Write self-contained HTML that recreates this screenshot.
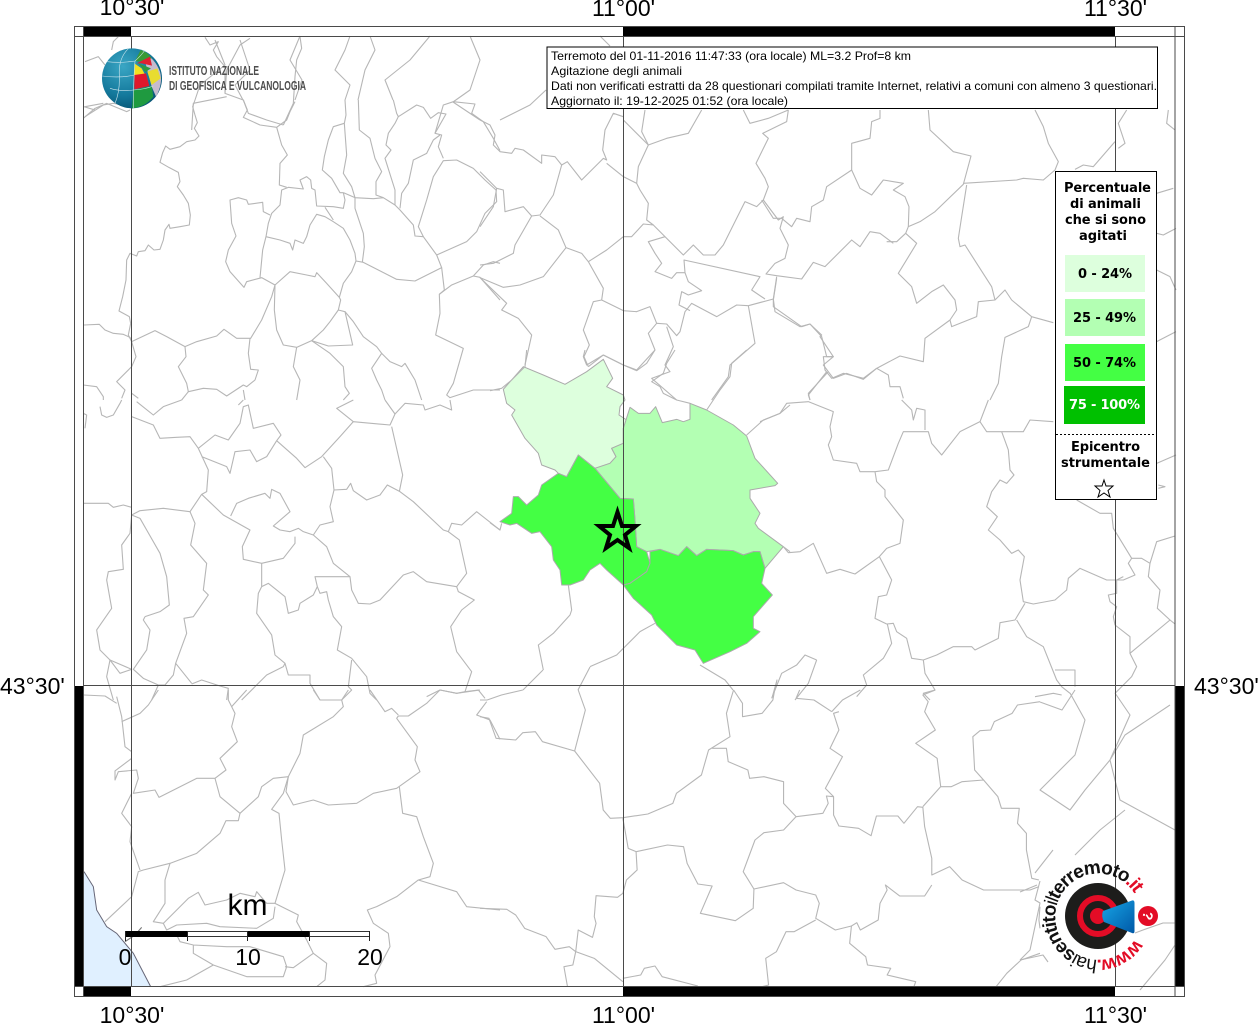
<!DOCTYPE html>
<html><head><meta charset="utf-8"><style>
html,body{margin:0;padding:0;background:#fff;width:1258px;height:1024px;overflow:hidden}
svg{display:block;position:absolute;left:0;top:0}
.m path{fill:none;stroke:#b6b6b6;stroke-width:1.1;stroke-linejoin:round;vector-effect:non-scaling-stroke}
.h{font-family:"Liberation Sans",sans-serif;font-size:23px;fill:#000}
.i{font-family:"Liberation Sans",sans-serif;font-size:12px;fill:#000}
.l{font-family:"DejaVu Sans",sans-serif;font-size:13px;font-weight:bold;fill:#000}
.p{stroke:#aaa;stroke-width:1;vector-effect:non-scaling-stroke;stroke-linejoin:round}
</style></head><body>
<svg width="1258" height="1024" viewBox="0 0 1258 1024" xmlns="http://www.w3.org/2000/svg">
<!-- water -->
<g transform="translate(80,690) scale(.33333)"><path d="M12 545 40 590 50 660 80 710 110 730 160 790 212 890 12 890Z" fill="#e0f0ff"/><path d="M12 545 40 590 50 660 80 710 110 730 160 790 212 890" fill="none" stroke="#667" stroke-width="3"/></g>
<!-- coloured municipalities -->
<g transform="translate(490,350) scale(.33333)">
<path class="p" fill="#ddffdd" d="M40 118 100 50 160 75 225 103 290 65 340 28 368 85 350 110 400 135 405 150 390 170 387 195 410 210 400 235 400 280 365 295 378 320 360 340 315 355 265 315 230 380 205 370 195 360 155 345 145 310 105 265 65 195 75 180 50 160Z"/>
<path class="p" fill="#b3ffb3" d="M400 235 420 172 445 190 480 190 497 170 517 218 560 208 580 215 600 208 600 160 650 180 730 225 770 258 795 325 863 400 855 407 780 420 780 445 810 490 795 520 805 535 880 590 825 655 810 605 790 605 760 615 730 602 650 598 620 617 590 590 565 617 510 598 470 605 440 590 435 510 430 447 390 445 315 355 360 340 378 320 365 295 400 280Z"/>
<path class="p" fill="#44ff44" d="M30 515 65 490 70 440 85 440 110 465 145 435 155 405 205 370 230 380 265 315 315 355 390 445 430 447 435 510 440 590 470 605 480 640 470 665 420 700 400 705 350 660 330 640 300 660 280 690 240 705 215 705 210 660 190 630 185 590 150 545 125 550 80 520 60 525Z"/>
<path class="p" fill="#44ff44" d="M480 605 510 598 565 617 590 590 620 617 650 598 730 602 760 615 790 605 810 605 825 655 815 700 847 735 790 800 790 835 810 845 770 880 720 905 640 940 615 900 560 885 500 825 485 795 430 745 400 705 420 700 470 665 480 640Z"/>
</g>
<!-- borders -->
<g class="m">
<g transform="translate(80,100) scale(.33333)"><path d="M345 0 338 20 345 45 352 68 343 85 357 108 345 120 320 125 300 140 270 148 257 138 248 158 240 187 268 203 295 217 300 245 292 260 310 285 325 310 331 345 328 375 300 380 270 385 267 373 255 390 250 420 240 448 222 450 205 435 195 452 175 455 170 468 150 460 140 480 138 540 128 590 117 633 148 650 152 670 145 705 155 725"/>
<path d="M12 675 58 673 75 690 100 700 130 703 150 712 155 725 225 692 260 710 315 740 350 725 410 708 432 688 470 715 512 715 545 660 575 590 585 555"/>
<path d="M540 533 548 450 558 410 565 370 575 340 600 315 605 270 625 262 670 267 660 240 680 230 692 240 695 265 705 270 710 318 760 320 790 325 795 300 790 278"/>
<path d="M570 345 550 335 548 307 505 313 500 300 475 293 450 300 455 370 468 408 445 450 437 485 450 515 492 562 500 545 545 533 585 555 630 515 680 525 705 530 710 518 740 550 778 592 790 550 815 515 828 483 825 460 810 420 790 385 760 365 735 350 710 343 690 375 680 410 670 430 645 420 638 450 630 430 600 420 558 410"/>
<path d="M585 555 583 630 590 690 610 735 650 742 695 722 730 690 750 665 775 630 782 600 778 592"/>
<path d="M695 722 745 738 818 735 795 635 775 630"/>
<path d="M795 635 820 665 850 710 890 740 905 760 875 805 890 840 905 870 915 900"/>
<path d="M905 760 930 785 965 800 975 790 1005 840 1025 900"/>
<path d="M650 742 640 800 660 840 650 900"/>
<path d="M695 722 750 760 790 800 795 860 808 880 790 900"/>
<path d="M510 715 505 760 512 808 535 810 525 840 500 860 490 855 440 888 410 868 370 865 325 875 320 850 295 800 318 770 315 740"/>
<path d="M325 875 305 900M490 870 495 900"/>
<path d="M735 322 760 360M790 278 825 293 880 296 910 293 945 315 960 330 1000 375 1005 408 1030 410 1070 465 1085 503 1005 543 950 538 850 487 828 483"/>
<path d="M825 293 825 325 850 400 853 440 847 487"/>
<path d="M1085 503 1093 570 1078 583 1080 640 1067 705 1150 745 1120 850 1100 885 1110 893 1180 870 1260 870"/>
<path d="M1078 583 1115 555 1180 528 1200 532 1260 600M1180 528 1210 495 1240 485 1260 490"/>
<path d="M1070 465 1160 425 1190 395 1215 340 1250 305 1248 270 1215 240 1180 205 1130 180 1090 182 1060 230 1040 300 1015 380 1030 410"/>
<path d="M1090 175 1075 140 1085 105 1065 100 1098 42 1075 38 1052 55 1030 22 1010 15 955 50 945 70 925 100 918 135 933 150 915 175 945 270 945 315"/>
<path d="M960 325 965 280 985 250 1000 180 1040 160 1060 120 1080 105"/>
<path d="M835 0 838 90 870 115 885 175 905 215 888 245 888 285 910 293"/>
<path d="M795 0 798 45 793 70 800 165 790 220 815 260 825 293"/>
<path d="M793 70 760 80 745 120 733 170 727 210 755 235 780 278 790 278"/>
<path d="M940 0 950 40 955 50"/>
<path d="M1065 100 1090 15 1120 5 1185 12 1175 40 1210 65 1240 115 1260 152"/>
<path d="M490 0 502 30 490 52 540 75 590 82 620 60 630 35 645 5"/>
<path d="M590 82 605 135 622 165 600 190 598 255 620 262"/>
<path d="M10 55 45 25 80 10 140 35 150 30M12 20 45 30"/>
<path d="M155 725 168 770 155 800 110 845 135 870 125 895M155 880 175 895"/>
<path d="M10 855 50 860 70 890 70 900"/></g>
<g transform="translate(80,400) scale(.33333)"><path d="M155 50 220 75 240 115 290 112 330 110 355 145 385 210 380 275 365 283 330 335 250 325 180 332 155 345 150 400 125 435 130 508 85 515 80 540 95 625 50 690 60 750 90 780 120 820 155 808"/>
<path d="M170 5 220 45 250 20 305 0"/>
<path d="M355 145 405 105 445 120 480 70 490 20 505 15 520 85 580 70 603 105 590 122 560 170 530 185 510 150 465 155 450 220 440 200 365 170"/>
<path d="M490 0 475 15M590 122 650 175 675 203 725 170 780 110 820 65 930 75 945 42 975 10 1030 15 1035 30 1080 15 1115 30 1110 0"/>
<path d="M730 170 755 205 762 270 800 268 812 250 820 272 860 300 900 285 922 255 960 275 1000 305 1090 390 1105 395 1115 370 1145 375 1190 335 1260 390"/>
<path d="M915 0 945 42M820 65 770 25 820 0"/>
<path d="M935 80 968 225 958 275"/>
<path d="M762 270 750 320 760 365 720 375 700 405 670 395 655 385 630 395 600 390 580 378 630 335 600 280 575 268 570 295 555 280 505 295 470 310 452 348"/>
<path d="M365 283 430 345 510 390 487 440 490 478 545 490 610 475 645 430 645 410"/>
<path d="M700 405 740 440 760 490 810 530 815 570 835 610 870 612 900 600 970 525 1000 515 1040 545 1130 560 1160 520 1138 420 1105 395"/>
<path d="M545 490 545 560 535 580 530 640 575 705 585 765 615 790 625 825 690 825 690 850 720 900"/>
<path d="M545 560 565 550 615 590 625 640 655 630 660 610 700 585 712 560 705 530 810 530"/>
<path d="M712 560 720 580 740 575 745 600 760 650 785 680 772 750 815 775 860 830 870 880 890 900"/>
<path d="M1130 560 1135 575 1183 600 1145 630 1112 680 1130 755 1175 815 1155 875"/>
<path d="M330 335 345 370 332 435 380 490 370 570 385 585 340 650 312 655 320 700 287 790 335 850"/>
<path d="M195 650 240 635 268 615 260 530 240 460 200 390 180 355 155 345"/>
<path d="M195 650 190 660 210 690 200 750 160 808 190 835 235 855 255 855 280 825 287 790"/>
<path d="M155 808 90 780 80 830 100 900"/>
<path d="M235 855 215 900"/>
<path d="M10 310 85 310 100 322 130 315 155 322"/>
<path d="M335 852 365 840 420 858 445 865 440 900"/>
<path d="M485 900 525 860 560 825 610 800 615 790"/>
<path d="M815 780 805 860 815 870 785 900"/>
<path d="M1155 875 1130 880 1080 870 1040 890M1155 875 1195 870 1215 895"/>
<path d="M60 20 65 45 80 52 100 45 120 10 125 0"/>
<path d="M10 40 20 45 15 85"/></g>
<g transform="translate(80,690) scale(.33333)"><path d="M110 20 125 80 135 170 155 185M12 15 75 18 110 40"/>
<path d="M235 0 205 45 180 70 125 95"/>
<path d="M155 205 105 243 105 270 115 245 170 240 175 265 160 310 225 300 237 322 350 265 405 265 438 240 420 205 472 155 455 110 465 70 445 30 445 0"/>
<path d="M500 0 455 50"/>
<path d="M405 265 420 320 480 370 535 320 545 290 580 265 625 260 610 310 575 358 597 370 605 450 615 540 600 590 585 640 655 675 650 695 680 750 700 790 740 820 735 870 710 890"/>
<path d="M480 370 475 392 438 392 420 430 350 490 270 520 190 540 175 545 155 620 75 695"/>
<path d="M155 310 125 370 155 410 150 455 180 540"/>
<path d="M270 520 255 570 255 640 220 695 250 700 325 625 355 607 375 645 440 630 480 610 525 620 530 605 560 640 585 640"/>
<path d="M250 700 260 720 290 705 380 700 420 710 530 715 580 685 585 650"/>
<path d="M290 735 300 755 340 765 440 770 510 770 610 800 620 830 610 860 500 860 400 825 340 790 340 765"/>
<path d="M400 825 320 870 240 890"/>
<path d="M615 830 640 833 700 790"/>
<path d="M625 260 618 305 640 345 700 330 745 345 830 340 880 310 950 295 1020 245 1005 210 1012 170 950 85 955 78 985 78 1040 40 1075 5 1080 0"/>
<path d="M955 75 935 55 915 65 870 0"/>
<path d="M700 0 720 30 785 30 790 50 760 80 670 135 660 190 625 260"/>
<path d="M785 30 805 0"/>
<path d="M958 290 968 370 1010 380 1030 440 1060 520 1050 560 1015 570 950 620 890 650 862 660 880 700 925 730 930 770 885 855 890 880 850 890"/>
<path d="M1015 570 1130 605 1160 650 1260 660"/>
<path d="M1080 0 1130 10 1200 0M1220 35 1190 75 1230 90 1260 148"/>
<path d="M185 712 165 735 135 755" style="stroke:#777"/></g>
<g transform="translate(480,100) scale(.33333)"><path d="M0 60 30 75 45 105 40 135 60 155 95 160 105 145 130 150 185 190 185 165 225 170 245 195 262 185 305 240 370 175 380 180 368 150 375 90 400 40 430 50"/>
<path d="M245 195 220 285 180 345 155 348 130 320 75 335 70 270 50 265 0 215"/>
<path d="M50 265 40 320 0 380"/>
<path d="M155 348 105 435 100 460 40 490 0 495"/>
<path d="M180 348 235 390 258 443 305 460 325 485 370 565 365 600 340 605 310 690 328 735 312 770 325 800"/>
<path d="M258 443 190 530 120 555 70 562 0 533 80 610 65 630 115 655 155 705 135 795"/>
<path d="M325 485 380 450 430 410 455 410 490 372 520 375 500 360 505 310 480 270 470 250 430 230 380 190"/>
<path d="M470 250 475 200 505 135 430 60"/>
<path d="M505 135 485 95 495 30M505 135 560 115 625 100 665 30"/>
<path d="M365 600 430 632 470 635 510 620 530 670 505 700 525 750 470 810 430 795 370 765 325 800"/>
<path d="M520 375 610 465 640 435 670 465 705 465 730 435 795 305 830 320 850 300 865 260 855 235 828 190 865 115 848 100 920 65 925 30"/>
<path d="M850 300 895 360 910 350 900 385 925 435 915 475 885 490 858 522 890 527 965 537 1000 487 1035 500 1115 420 1140 440 1170 395 1200 400 1240 430"/>
<path d="M530 670 560 672 590 707 600 695 615 635 635 610 710 650 770 615 805 617 880 597 890 530"/>
<path d="M555 410 505 425 525 460 545 490 525 515 575 535 590 518 615 518 612 480 840 530 815 570 855 597"/>
<path d="M615 518 625 545 665 572 625 585 605 575 597 615 630 632"/>
<path d="M805 617 825 730 750 795 745 830 695 900"/>
<path d="M560 680 580 740 555 795 570 815 515 835 590 900"/>
<path d="M880 597 885 635 960 680 990 672 1025 710 1040 770 1060 770 1030 795 1045 815 985 880 990 900"/>
<path d="M1045 815 1060 835 1100 820 1150 838 1190 805"/>
<path d="M790 30 810 70 865 55 925 30"/></g>
<g transform="translate(760,100) scale(.33333)"><path d="M380 425 410 425 437 400 445 380 480 365 525 335 610 253 633 168 580 155 510 90 505 30"/>
<path d="M610 250 770 240 790 235 850 240 885 210 895 185 865 130 850 80 825 30"/>
<path d="M620 255 605 350 595 415 600 440 615 435 650 490 695 560 705 600 735 570 755 600 815 650 880 668M705 600 655 605 650 650 575 680 570 660 590 630 585 600 550 555 515 575 470 610 455 560 415 520 470 430 437 400"/>
<path d="M570 660 495 715 490 785 420 768 350 805 310 835 250 820 215 835 195 810 190 770 220 770 180 710 185 705 150 672 125 680 40 620 40 600 50 535"/>
<path d="M350 805 385 825 390 860 420 860 430 895"/>
<path d="M200 815 145 885 150 900"/>
<path d="M815 650 805 680 735 712 725 770 715 850 690 900"/>
<path d="M445 380 447 320 435 290 400 270 430 250 370 240 335 285 300 265 275 210 275 130 330 115 335 65 360 55 360 30"/>
<path d="M275 210 200 260 190 300 155 320 150 365 110 355 95 380 65 355 40 355 5 300"/>
<path d="M1065 125 1000 200 970 195 945 208"/>
<path d="M1190 280 1240 265M1190 400 1210 405 1248 385M1190 510 1230 530 1248 570M1190 725 1248 695"/>
<path d="M1100 30 1075 70 1095 130 1075 145"/>
<path d="M1225 30 1220 70 1245 90"/></g>
<g transform="translate(760,400) scale(.33333)"><path d="M0 65 60 40 80 10 145 5 220 35 210 80 215 110 205 135 220 180 290 190 300 215 345 215 385 210 415 130 430 95 505 95 515 130 545 165 600 95 660 65 680 95 725 95 790 95 810 60 880 65"/>
<path d="M425 0 455 30 460 60 470 25 495 30 495 90"/>
<path d="M660 65 685 0"/>
<path d="M725 95 745 150 750 210 762 225 740 250 720 240 695 275 680 320 712 350 685 390 720 420 755 460 775 450 793 470 780 540 790 605 820 612 885 600 920 570 925 535 960 505 1040 540 1090 540 1125 525 1105 490 1115 475 1060 385 1055 340 1020 340 950 300"/>
<path d="M345 215 350 245 375 270 375 290 430 360 420 430 380 445 358 470 395 540 380 585 355 590 345 655 380 672 400 670 410 695 440 715 455 775 490 780 530 765 580 740 635 740 645 750 715 715 720 668 765 660 795 610"/>
<path d="M358 470 285 522 240 508 200 520 160 430 120 455 85 458 70 440"/>
<path d="M382 672 395 730 370 775 310 825 320 855 290 890M490 780 495 820 525 870 490 880 510 900"/>
<path d="M770 660 800 710 850 740 890 840 905 860 930 880M885 810 945 810 945 860M825 890 880 880 905 885"/>
<path d="M170 780 135 765 110 795 65 820 35 895M170 780 145 850 105 900"/>
<path d="M1115 475 1145 475 1170 490 1165 530 1200 570 1192 625 1230 660 1110 760 1110 710 1065 675 1060 650 1070 620 1050 605 1045 585 1070 580 1070 540 1090 530"/>
<path d="M1230 660 1245 672M1170 490 1190 425 1245 408"/>
<path d="M1110 760 1130 800 1115 830 1065 880"/>
<path d="M1190 190 1248 165M1195 255 1215 260 1195 265"/></g>
<g transform="translate(480,690) scale(.35714,.33333)"><path d="M0 30 20 30 60 15 120 0"/>
<path d="M0 80 25 85 45 145 100 150 120 128 155 125 175 155 265 183 295 60 275 0"/>
<path d="M265 183 335 280 345 360 365 385 400 383 470 372 540 340 550 310 620 255 640 180 700 140 690 70 710 0"/>
<path d="M400 385 415 475 437 485 525 465 570 470 580 520 610 582 650 588 617 670 715 692 765 655 767 597 737 545 770 450 795 428 850 420 885 380 850 340 850 275 795 260 755 265 750 240 695 215 690 175 650 175"/>
<path d="M885 380 960 370 975 340 970 318 990 320 990 375 1005 408 1060 415 1095 437 1110 378 1170 378 1187 400 1225 350 1240 352 1245 410 1265 505 1265 555 1315 530 1350 570 1410 600 1470 600 1540 600 1565 590"/>
<path d="M990 320 967 295 1015 200 980 175 1005 120 990 70 1005 65"/>
<path d="M1240 350 1290 290 1320 290 1350 275 1410 270 1450 320 1460 355 1510 355 1505 400 1530 430 1530 480 1545 565 1565 570"/>
<path d="M1290 290 1280 205 1220 160 1275 120 1245 65 1255 35 1240 15 1275 0"/>
<path d="M1410 270 1385 240 1380 140 1400 122 1430 120 1440 95 1490 70 1505 45 1568 35"/>
<path d="M985 65 935 30 885 25 895 0M985 65 1015 30 1065 0"/>
<path d="M710 0 735 40 735 80 790 70 820 30 825 0"/>
<path d="M767 597 850 578 885 600 940 615 950 640 940 685 995 720 1040 708 1055 698 1065 720 1115 690 1120 640 1140 600 1135 585 1175 618 1245 618 1265 585"/>
<path d="M940 690 880 725 857 725 830 785 800 805 808 885 790 890"/>
<path d="M1040 708 1035 760 1080 800 1085 825 1150 835 1140 855 1220 875 1215 890"/>
<path d="M437 485 440 540 410 570 400 610 385 622 325 617 320 680 325 700 315 742 275 720 268 785 250 770 210 778 185 740 125 715 100 675 75 658 0 655"/>
<path d="M268 785 320 805 400 875M268 785 260 825 235 830 245 890"/>
<path d="M400 865 450 855 460 835 490 828 510 860 610 888"/>
<path d="M1568 790 1515 810 1475 850 1445 890"/>
<path d="M1568 650 1565 690 1568 715"/></g>
<g transform="translate(490,350) scale(.33333)"><path d="M0 122 35 115 65 90 105 50 110 0"/>
<path d="M285 0 280 20 290 45 340 15 400 45 440 62 470 40 495 0"/>
<path d="M555 0 530 40 520 70 485 95 510 110 520 130 560 150 600 160"/>
<path d="M650 180 690 120 720 80 725 40 770 0"/>
<path d="M770 255 820 210 870 190 900 165"/>
<path d="M880 590 900 605"/>
<path d="M0 518 30 540 35 520"/>
<path d="M235 705 245 780 240 795 190 850 145 885 160 960"/>
<path d="M300 950 380 915 450 845 495 820"/></g>
<g transform="translate(70,0) scale(.33333)"><path d="M125 150 130 125 145 110"/>
<path d="M45 185 85 170 105 195M45 320 100 310M45 350 100 315 130 310 185 320"/>
<path d="M405 112 420 135 445 125 430 150 440 170 465 200 465 280 520 300 535 340 590 360 640 375"/>
<path d="M540 115 510 135 470 210 465 280M690 110 695 145 680 180 675 230 670 310 640 375M470 290 370 310 365 390"/></g>
<path d="M195 100 200 85 225 65 215 40M243 100 235 85 250 70 240 40M295 100 302 80 290 60 300 36M345 100 350 85 335 70 345 50 350 36M358 100 365 70 375 50 370 36M393 100 385 80 410 60 430 36M453 102 470 90 480 60 470 36M453 102 480 120M500 120 530 105 546 90M600 36 610 46M733 690 725 680 700 665M775 690 777 680 772 698M590 667 578 690M543 670 523 690"/>
<path d="M1040 702 1062 710 1075 690M1070 693 1085 720 1075 755 1040 790 1070 810 1085 790 1110 760 1125 735 1170 705M1110 760 1120 800 1175 830M1115 693 1130 715 1110 760M1075 855 1100 830 1125 810M1040 881 1035 900 1040 903 1030 950 1020 960M1020 892 1037 885M1020 960 1043 955 1048 962M1053 850 1035 873M1135 933 1143 930 1163 923 1175 923M1140 990 1165 960 1175 945"/>
</g>
<!-- grid -->
<g stroke="#4a4a4a" stroke-width="1" fill="none">
<path d="M131.500 36V987M623.500 36V987M1115.500 36V987M83 685.500H1175"/>
</g>
<!-- frame -->
<g fill="#000">
<rect x="83" y="27" width="48" height="9"/><rect x="623" y="27" width="492" height="9"/>
<rect x="83" y="987" width="48" height="9"/><rect x="623" y="987" width="492" height="9"/>
<rect x="74" y="686" width="9" height="301"/><rect x="1175" y="686" width="10" height="301"/>
</g>
<g fill="none" stroke="#4a4a4a" stroke-width="1"><rect x="74.500" y="26.500" width="1110" height="970"/><rect x="83.500" y="36.500" width="1091.500" height="950"/><path d="M74 36.500H83M1175 36.500H1185M74 986.500H83M1175 986.500H1185M83.500 26V36M1175 26V36M83.500 987V996M1175 987V996"/></g>
<!-- labels -->
<text class="h" x="132" y="15" text-anchor="middle">10°30'</text>
<text class="h" x="623.500" y="16" text-anchor="middle">11°00'</text>
<text class="h" x="1115.500" y="16" text-anchor="middle">11°30'</text>
<text class="h" x="132" y="1023" text-anchor="middle">10°30'</text>
<text class="h" x="623.500" y="1023" text-anchor="middle">11°00'</text>
<text class="h" x="1115.500" y="1023" text-anchor="middle">11°30'</text>
<text class="h" x="0" y="694">43°30'</text>
<text class="h" x="1194" y="694">43°30'</text>
<!-- INGV logo -->
<defs>
<radialGradient id="gb" cx=".35" cy=".3" r=".8"><stop offset="0" stop-color="#3aa6c4"/><stop offset=".6" stop-color="#14799c"/><stop offset="1" stop-color="#054f6e"/></radialGradient>
<linearGradient id="bl" x1="0" x2="1" y1="0" y2="1"><stop offset="0" stop-color="#17a5e6"/><stop offset="1" stop-color="#0058a6"/></linearGradient>
</defs>
<g transform="translate(70,0) scale(.33333)">
<circle cx="186" cy="235" r="90" fill="url(#gb)"/>
<path d="M222 160Q255 175 270 215Q280 250 258 290L245 260 228 195Z" fill="#c6bbce"/>
<path d="M196 182 212 150Q232 155 245 175L205 185Z" fill="#3a9a35"/>
<path d="M200 190 240 170 246 197 215 190Z" fill="#e02030"/>
<path d="M193 190 215 205 226 225 193 225Z" fill="#f2e020"/>
<path d="M205 190 243 205 226 216Z" fill="#2f9a40"/>
<path d="M193 225 228 220 238 258 193 268Z" fill="#e0182c"/>
<path d="M232 215 262 205 272 235 245 255Z" fill="#e8dc30"/>
<path d="M190 270 245 258 250 290Q225 322 186 325Z" fill="#1f9a40"/>
<g fill="none" stroke="#cfe6ee" stroke-width="1.800"><path d="M112 185Q150 190 195 183Q215 165 225 150M97 228Q150 235 193 225M120 265Q150 275 190 270Q225 268 250 258M175 146Q145 175 148 225Q150 275 135 310M195 183Q190 250 190 325"/></g>
</g>
<g font-family="'Liberation Sans',sans-serif" fill="#4d4d4d" font-size="13" font-weight="bold">
<text x="169" y="75" textLength="90" lengthAdjust="spacingAndGlyphs">ISTITUTO NAZIONALE</text>
<text x="169" y="90" textLength="137" lengthAdjust="spacingAndGlyphs">DI GEOFISICA E VULCANOLOGIA</text>
</g>
<!-- info box -->
<rect x="547" y="47" width="610.500" height="61.500" fill="#fff" stroke="#000" stroke-width="1"/>
<text class="i" x="551" y="60" textLength="360" lengthAdjust="spacingAndGlyphs">Terremoto del 01-11-2016 11:47:33 (ora locale) ML=3.2 Prof=8 km</text>
<text class="i" x="551" y="75" textLength="131" lengthAdjust="spacingAndGlyphs">Agitazione degli animali</text>
<text class="i" x="551" y="90" textLength="606" lengthAdjust="spacingAndGlyphs">Dati non verificati estratti da 28 questionari compilati tramite Internet, relativi a comuni con almeno 3 questionari.</text>
<text class="i" x="551" y="105" textLength="237" lengthAdjust="spacingAndGlyphs">Aggiornato il: 19-12-2025 01:52 (ora locale)</text>
<!-- legend -->
<rect x="1055.500" y="171.500" width="101" height="328" fill="#fff" stroke="#000"/>
<rect x="1065" y="255" width="80" height="37" fill="#ddffdd"/>
<rect x="1065" y="299" width="80" height="37" fill="#b3ffb3"/>
<rect x="1065" y="344" width="80" height="37" fill="#44ff44"/>
<rect x="1064" y="386" width="81" height="38" fill="#00c000"/>
<path d="M1056 434.500H1156" stroke="#000" stroke-dasharray="2 2"/>
<text class="l" x="1064" y="192" textLength="87">Percentuale</text>
<text class="l" x="1070" y="208" textLength="71">di animali</text>
<text class="l" x="1065" y="224" textLength="81">che si sono</text>
<text class="l" x="1079" y="240" textLength="48">agitati</text>
<text class="l" x="1078" y="278" textLength="54">0 - 24%</text>
<text class="l" x="1073" y="322" textLength="63">25 - 49%</text>
<text class="l" x="1073" y="367" textLength="63">50 - 74%</text>
<text class="l" x="1069" y="409" textLength="71" style="fill:#fff">75 - 100%</text>
<text class="l" x="1071" y="451" textLength="69">Epicentro</text>
<text class="l" x="1061" y="467" textLength="89">strumentale</text>
<path d="M1104 480 1106 486 1113 486 1108 490.500 1110 497 1104 493 1098 497 1100 490.500 1095 486 1102 486Z" fill="#fff" stroke="#000" stroke-width="1"/>
<!-- epicentre star -->
<path d="M617.500 512 622 526 636 526 625 535 629 548 617.500 540 606 548 610 535 599 526 613 526Z" fill="none" stroke="#000" stroke-width="4" stroke-miterlimit="10"/>
<!-- scale bar -->
<g>
<rect x="125.500" y="931.500" width="244" height="5" fill="#fff" stroke="#333"/>
<rect x="125" y="931" width="62" height="6" fill="#000"/><rect x="247" y="931" width="62" height="6" fill="#000"/>
<path d="M125.500 931V941M187.500 931V941M247.500 931V941M309.500 931V941M369.500 931V941" stroke="#222"/>
<g font-family="'Liberation Sans',sans-serif" fill="#000" font-size="23px" text-anchor="middle">
<text x="125" y="965">0</text><text x="248" y="965">10</text><text x="370" y="965">20</text>
<text x="247.500" y="915" font-size="30px">km</text></g>
</g>
<!-- hai sentito logo -->
<g>
<circle cx="1098" cy="916" r="33" fill="#1d1d1b"/>
<circle cx="1098" cy="916" r="18" fill="none" stroke="#e30c26" stroke-width="6"/>
<circle cx="1098" cy="916" r="8" fill="#e30c26"/>
<path d="M1103 911 1132 900.500Q1134.500 900 1134.500 903V931Q1134.500 934 1132 933L1104 922Q1101 916 1103 911Z" fill="url(#bl)"/>
<circle cx="1148" cy="916" r="10" fill="#e30c26"/>
<text x="0" y="0" transform="translate(1143,915) rotate(100)" font-family="'Liberation Sans',sans-serif" font-size="14" font-weight="bold" fill="#fff" text-anchor="middle">?</text>
<path id="arc" d="M1135 939A43 43 0 1 1 1137 898" fill="none"/>
<text font-family="'Liberation Sans',sans-serif" font-size="19" fill="#111"><textPath href="#arc" textLength="222" lengthAdjust="spacing"><tspan fill="#e30c26" font-weight="bold">www.</tspan>hai<tspan font-weight="bold">sentito</tspan>il<tspan font-weight="bold">terremoto</tspan><tspan fill="#e30c26" font-weight="bold">.it</tspan></textPath></text>
</g>
</svg>
</body></html>
